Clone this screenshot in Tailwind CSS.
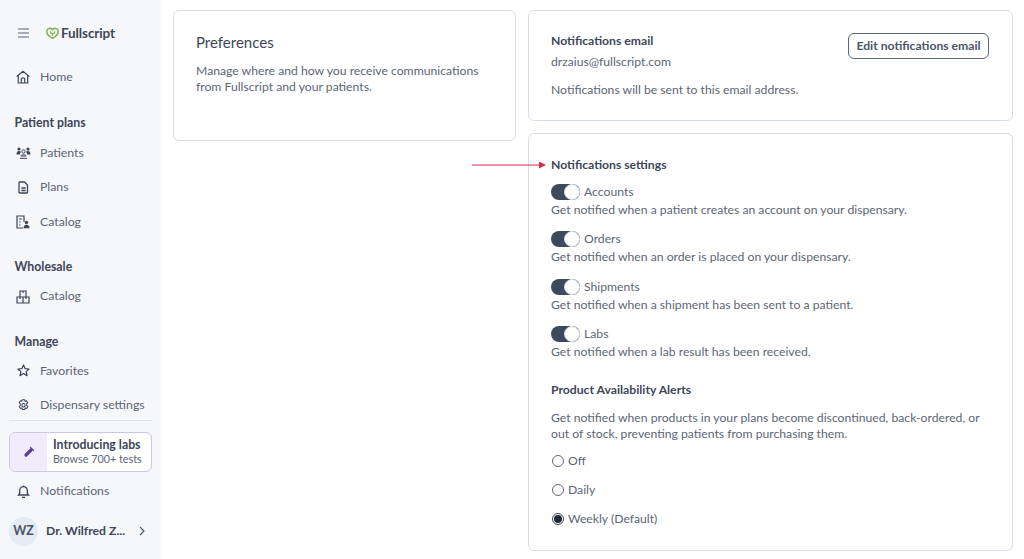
<!DOCTYPE html>
<html lang="en">
<head>
    <meta charset="UTF-8">
    <title>Fullscript - Preferences</title>
    <script src="https://cdn.jsdelivr.net/npm/@tailwindcss/browser@4"></script>
</head>
<body class="bg-white font-['Lato',sans-serif] text-[12.2px] text-[#4a5568] overflow-hidden">
<div class="relative flex h-[559px] w-[1024px] overflow-hidden">
    <!-- Sidebar -->
    <aside class="flex w-[161px] shrink-0 flex-col bg-[#f5f7fb] text-[12.3px]">
        <div class="flex h-[66px] items-center pl-[18px]">
            <svg class="h-[10px] w-[11px] text-[#5b6478]" viewBox="0 0 11 10" fill="none" stroke="currentColor" stroke-width="1.2"><path d="M0 1h11M0 5h11M0 9h11"/></svg>
            <svg class="ml-[17px] h-[12px] w-[13px]" viewBox="0 0 13 12" fill="none" stroke="#86b553" stroke-width="1.6"><path d="M6.500 11.200C3 9.500.8 7 .8 4.200.8 1.500 4.500.2 6.500 2.800 8.500.2 12.200 1.500 12.200 4.200c0 2.800-2.200 5.300-5.700 7z"/><path d="M6.500 9V6.500M4.200 4.300c0 1.500 1 2.200 2.300 2.200s2.300-.7 2.300-2.200" stroke-width="1.200"/></svg>
            <span class="ml-[2px] text-[13.500px] font-bold tracking-[-0.1px] text-[#3c4658]">Fullscript</span>
        </div>
        <a class="flex h-[22px] items-center pl-[16px] text-[#5d6676]">
            <svg class="h-[14px] w-[14px]" viewBox="0 0 14 14" fill="none" stroke="#3c4658" stroke-width="1.200"><path d="M.7 6.500 7 1.200l6.300 5.300M2.300 5.500V13h9.400V5.500M5.300 13V9.500a1.700 1.700 0 0 1 3.400 0V13"/></svg>
            <span class="ml-[10px]">Home</span>
        </a>
        <h2 class="mt-[23px] h-[23px] pl-[14.500px] font-bold leading-[24px] text-[#3c4658]">Patient plans</h2>
        <a class="mt-[1.500px] flex h-[34.500px] items-center pl-[16px] text-[#5d6676]">
            <svg class="h-[12px] w-[15px]" viewBox="0 0 15 12" fill="#3c4658"><circle cx="3" cy="2" r="1.600"/><circle cx="12" cy="2" r="1.600"/><path d="M.5 7.500c0-2.500 1-3.500 2.500-3.500 1 0 1.500.3 1.800.8L3.800 7.500zM14.500 7.500c0-2.500-1-3.500-2.500-3.500-1 0-1.500.3-1.800.8l1 2.700z"/><circle cx="7.500" cy="4.500" r="1.700" fill="none" stroke="#3c4658"/><path d="M4 11.300h7M4.800 9c.6-1 1.600-1.400 2.700-1.400s2.100.4 2.700 1.400z" fill="none" stroke="#3c4658"/></svg>
            <span class="ml-[9px]">Patients</span>
        </a>
        <a class="flex h-[34.500px] items-center pl-[18px] text-[#5d6676]">
            <svg class="h-[13px] w-[11px]" viewBox="0 0 11 13" fill="none" stroke="#3c4658" stroke-width="1.300" stroke-linejoin="round"><path d="M1.500 1h5l3 3v7.300a.7.7 0 0 1-.7.700H1.500a.7.700 0 0 1-.5-.7V1.700A.7.700 0 0 1 1.500 1zM3.300 7h4.400M3.300 9.500h4.400"/></svg>
            <span class="ml-[11px]">Plans</span>
        </a>
        <a class="flex h-[34.500px] items-center pl-[16px] text-[#5d6676]">
            <svg class="h-[14px] w-[14px]" viewBox="0 0 14 14" fill="none" stroke="#3c4658" stroke-width="1.200"><path d="M7 13H1V1h7v6M3 4h3M3 7h1.500M3 10h1.500"/><circle cx="10.500" cy="7.500" r="1.700" fill="#3c4658" stroke="none"/><path d="M7.500 13.200c0-2.200 1-3.500 3-3.500s3 1.300 3 3.500z" fill="#3c4658" stroke="none"/></svg>
            <span class="ml-[10px]">Catalog</span>
        </a>
        <h2 class="mt-[15.500px] h-[23px] pl-[14.500px] font-bold leading-[24px] text-[#3c4658]">Wholesale</h2>
        <a class="mt-[8px] flex h-[22px] items-center pl-[16px] text-[#5d6676]">
            <svg class="h-[14px] w-[14px]" viewBox="0 0 14 14" fill="none" stroke="#3c4658" stroke-width="1.200"><path d="M4 1h6v6H4zM1 7h6v6H1zM7 7h6v6H7zM7 1v2M4 7v2M10 7v2"/></svg>
            <span class="ml-[10px]">Catalog</span>
        </a>
        <h2 class="mt-[22px] h-[23px] pl-[14.500px] font-bold leading-[24px] text-[#3c4658]">Manage</h2>
        <a class="mt-[1px] flex h-[34.500px] items-center pl-[17px] text-[#5d6676]">
            <svg class="h-[13px] w-[13px]" viewBox="0 0 14 14" fill="none" stroke="#3c4658" stroke-width="1.300" stroke-linejoin="round"><path d="m7 1 1.800 4 4.200.4-3.200 2.800 1 4.300L7 10.300 3.200 12.500l1-4.300L1 5.400 5.200 5z"/></svg>
            <span class="ml-[10px]">Favorites</span>
        </a>
        <a class="flex h-[34.500px] items-center pl-[17px] text-[#5d6676]">
            <svg class="h-[13px] w-[13px]" viewBox="0 0 14 14" fill="none" stroke="#3c4658" stroke-width="1.100" stroke-linejoin="round"><path d="M5.800 .8h2.400l.5 1.700 1.600-.5 1.300 2-1.200 1.300.1 1.500 1.200 1.300-1.300 2-1.600-.5-.6 1.700H5.800l-.5-1.700-1.600.5-1.300-2 1.200-1.300-.1-1.500-1.200-1.300 1.300-2 1.600.5z"/><circle cx="7" cy="6.700" r="1.800"/></svg>
            <span class="ml-[10px]">Dispensary settings</span>
        </a>
        <hr class="mx-[9px] -mt-[3px] border-t border-[#e2e4ee]">
        <div class="mx-[9px] mt-[11px] flex h-[40px] overflow-hidden rounded-[6px] border border-[#cfc6e6] bg-white">
            <div class="flex w-[37px] items-center justify-center bg-[#f0ecfb]">
                <svg class="h-[12px] w-[12px]" viewBox="0 0 12 12" fill="none" stroke="#5b3f8f"><path d="M8 4 3 9" stroke-width="3.200" stroke-linecap="round"/><path d="M7.500 1.500 10.500 4.500" stroke-width="1.300" stroke-linecap="round"/></svg>
            </div>
            <div class="flex flex-col justify-center pl-[6px]">
                <span class="text-[12.300px] font-bold leading-[15px] text-[#3c4658]">Introducing labs</span>
                <span class="text-[10.800px] leading-[14px] text-[#5d6676]">Browse 700+ tests</span>
            </div>
        </div>
        <a class="mt-[8px] flex h-[24px] items-center pl-[17px] text-[#5d6676]">
            <svg class="h-[13px] w-[13px]" viewBox="0 0 13 13" fill="none" stroke="#3c4658" stroke-width="1.300"><path d="M1.500 10h10L10.300 8.500V5.500a3.800 3.800 0 0 0-7.600 0v3zM5 12.300h3M6.500.5v1.200"/></svg>
            <span class="ml-[10px]">Notifications</span>
        </a>
        <div class="mt-[13px] flex items-center pl-[9px]">
            <div class="flex h-[29px] w-[29px] items-center justify-center rounded-full bg-[#e4ebf3] text-[12.500px] font-bold text-[#4a5568]">WZ</div>
            <span class="ml-[8px] w-[86px] text-[12.200px] font-bold text-[#3c4658]">Dr. Wilfred Z...</span>
            <svg class="ml-[7px] h-[10px] w-[6px]" viewBox="0 0 6 10" fill="none" stroke="#4a5568" stroke-width="1.100"><path d="m1 1 4 4-4 4"/></svg>
        </div>
    </aside>

    <!-- Main -->
    <main class="grid grid-cols-[344px_485px] items-start gap-x-[11px] pl-[12px] pt-[10px]">
        <section class="row-span-2 h-[131px] w-[343px] rounded-[6px] border border-[#d8dee8] pl-[22px] pt-[21px]">
            <h1 class="text-[15px] leading-[20px] text-[#3c4658]">Preferences</h1>
            <p class="mt-[11px] leading-[16px] text-[#5d6676]">Manage where and how you receive communications<br>from Fullscript and your patients.</p>
        </section>
        <div class="flex flex-col gap-[12px]">
            <section class="flex h-[111px] justify-between rounded-[6px] border border-[#d8dee8] pl-[22px] pr-[23px] pt-[22px]">
                <div>
                    <h2 class="font-bold leading-[16px] text-[#3c4658]">Notifications email</h2>
                    <p class="mt-[3px] leading-[20px] text-[#5d6676]">drzaius@fullscript.com</p>
                    <p class="mt-[8px] leading-[20px] text-[#5d6676]">Notifications will be sent to this email address.</p>
                </div>
                <button class="h-[26px] w-[141px] rounded-[6px] border border-[#5d6676] font-bold text-[#4a5568]">Edit notifications email</button>
            </section>
            <section class="h-[418px] rounded-[6px] border border-[#d8dee8] pl-[22px] pt-[23px]">
                <h2 class="font-bold leading-[16px] text-[#3c4658]">Notifications settings</h2>
                <div class="mt-[11px] flex flex-col gap-[13.400px]">
                    <div>
                        <div class="flex items-center"><span class="flex h-[16px] w-[29px] justify-end rounded-full bg-[#3c4a5f]"><span class="h-[16px] w-[16px] rounded-full border border-[#d8dee8] bg-white"></span></span><span class="ml-[4px] leading-[16px] text-[#5d6676]">Accounts</span></div>
                        <p class="mt-[2px] leading-[16px] text-[#5d6676]">Get notified when a patient creates an account on your dispensary.</p>
                    </div>
                    <div>
                        <div class="flex items-center"><span class="flex h-[16px] w-[29px] justify-end rounded-full bg-[#3c4a5f]"><span class="h-[16px] w-[16px] rounded-full border border-[#d8dee8] bg-white"></span></span><span class="ml-[4px] leading-[16px] text-[#5d6676]">Orders</span></div>
                        <p class="mt-[2px] leading-[16px] text-[#5d6676]">Get notified when an order is placed on your dispensary.</p>
                    </div>
                    <div>
                        <div class="flex items-center"><span class="flex h-[16px] w-[29px] justify-end rounded-full bg-[#3c4a5f]"><span class="h-[16px] w-[16px] rounded-full border border-[#d8dee8] bg-white"></span></span><span class="ml-[4px] leading-[16px] text-[#5d6676]">Shipments</span></div>
                        <p class="mt-[2px] leading-[16px] text-[#5d6676]">Get notified when a shipment has been sent to a patient.</p>
                    </div>
                    <div>
                        <div class="flex items-center"><span class="flex h-[16px] w-[29px] justify-end rounded-full bg-[#3c4a5f]"><span class="h-[16px] w-[16px] rounded-full border border-[#d8dee8] bg-white"></span></span><span class="ml-[4px] leading-[16px] text-[#5d6676]">Labs</span></div>
                        <p class="mt-[2px] leading-[16px] text-[#5d6676]">Get notified when a lab result has been received.</p>
                    </div>
                </div>
                <h2 class="mt-[22px] font-bold leading-[16px] text-[#3c4658]">Product Availability Alerts</h2>
                <p class="mt-[12px] leading-[16px] text-[#5d6676]">Get notified when products in your plans become discontinued, back-ordered, or<br>out of stock, preventing patients from purchasing them.</p>
                <div class="mt-[11px] flex flex-col gap-[13px]">
                    <label class="flex h-[16px] items-center"><span class="ml-[1px] h-[12px] w-[12px] rounded-full border border-[#5d6676] bg-white"></span><span class="ml-[4px] text-[#5d6676]">Off</span></label>
                    <label class="flex h-[16px] items-center"><span class="ml-[1px] h-[12px] w-[12px] rounded-full border border-[#5d6676] bg-white"></span><span class="ml-[4px] text-[#5d6676]">Daily</span></label>
                    <label class="flex h-[16px] items-center"><span class="ml-[1px] flex h-[12px] w-[12px] items-center justify-center rounded-full border border-[#3c4658] bg-white"><span class="h-[8px] w-[8px] rounded-full bg-[#1f2937]"></span></span><span class="ml-[4px] text-[#5d6676]">Weekly (Default)</span></label>
                </div>
            </section>
        </div>
    </main>

    <!-- Annotation arrow -->
    <svg class="absolute left-[472px] top-[160px] h-[10px] w-[75px]" viewBox="0 0 75 10" fill="#d6294f"><path d="M0 4.500h68v1H0z"/><path d="m67 1.500 7 3.500-7 3.500z"/></svg>
</div>
</body>
</html>
